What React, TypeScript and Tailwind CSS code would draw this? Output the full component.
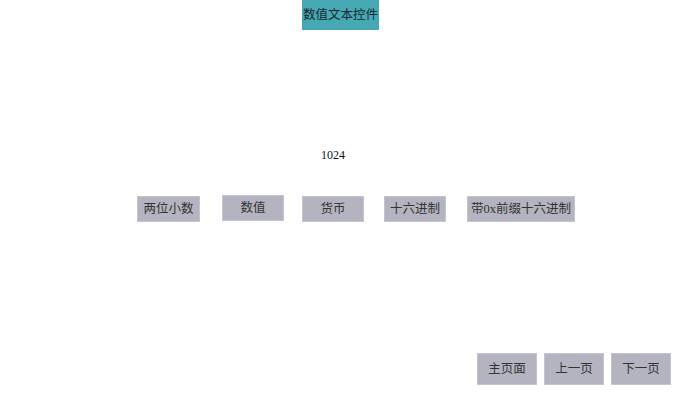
import React from "react";

const font = { fontFamily: '"Liberation Serif", "Noto Sans CJK SC", serif' };

function Btn({ label, w, h = 26, extra = "" }: { label: string; w: string; h?: number; extra?: string }) {
  return (
    <div
      className={`flex items-center justify-center whitespace-nowrap bg-[#b4b3c0] border border-[#c4c3ce] text-[12.5px] text-[#333] ${w} ${extra}`}
      style={{ height: h }}
    >
      {label}
    </div>
  );
}

export default function App() {
  return (
    <div className="w-[680px] h-[398px] bg-white flex flex-col overflow-hidden" style={font}>
      <div className="ml-[302px] w-[77px] h-[30px] bg-[#45a8b3] flex items-center justify-center whitespace-nowrap text-[12.5px] text-[#1a2a30]">
        数值文本控件
      </div>
      <div className="ml-[321px] mt-[117px] h-[16px] leading-[16px] text-[12px] text-[#111]">1024</div>
      <div className="flex items-start ml-[137px] mt-[33px]">
        <Btn label="两位小数" w="w-[63px]" />
        <Btn label="数值" w="w-[62px]" extra="ml-[22px] -mt-px" />
        <Btn label="货币" w="w-[62px]" extra="ml-[18px]" />
        <Btn label="十六进制" w="w-[62px]" extra="ml-[20px]" />
        <Btn label="带0x前缀十六进制" w="w-[108px]" extra="ml-[21px]" />
      </div>
      <div className="flex ml-[477px] mt-[131px] gap-[7px]">
        <Btn label="主页面" w="w-[60px]" h={32} />
        <Btn label="上一页" w="w-[60px]" h={32} />
        <Btn label="下一页" w="w-[60px]" h={32} />
      </div>
    </div>
  );
}
